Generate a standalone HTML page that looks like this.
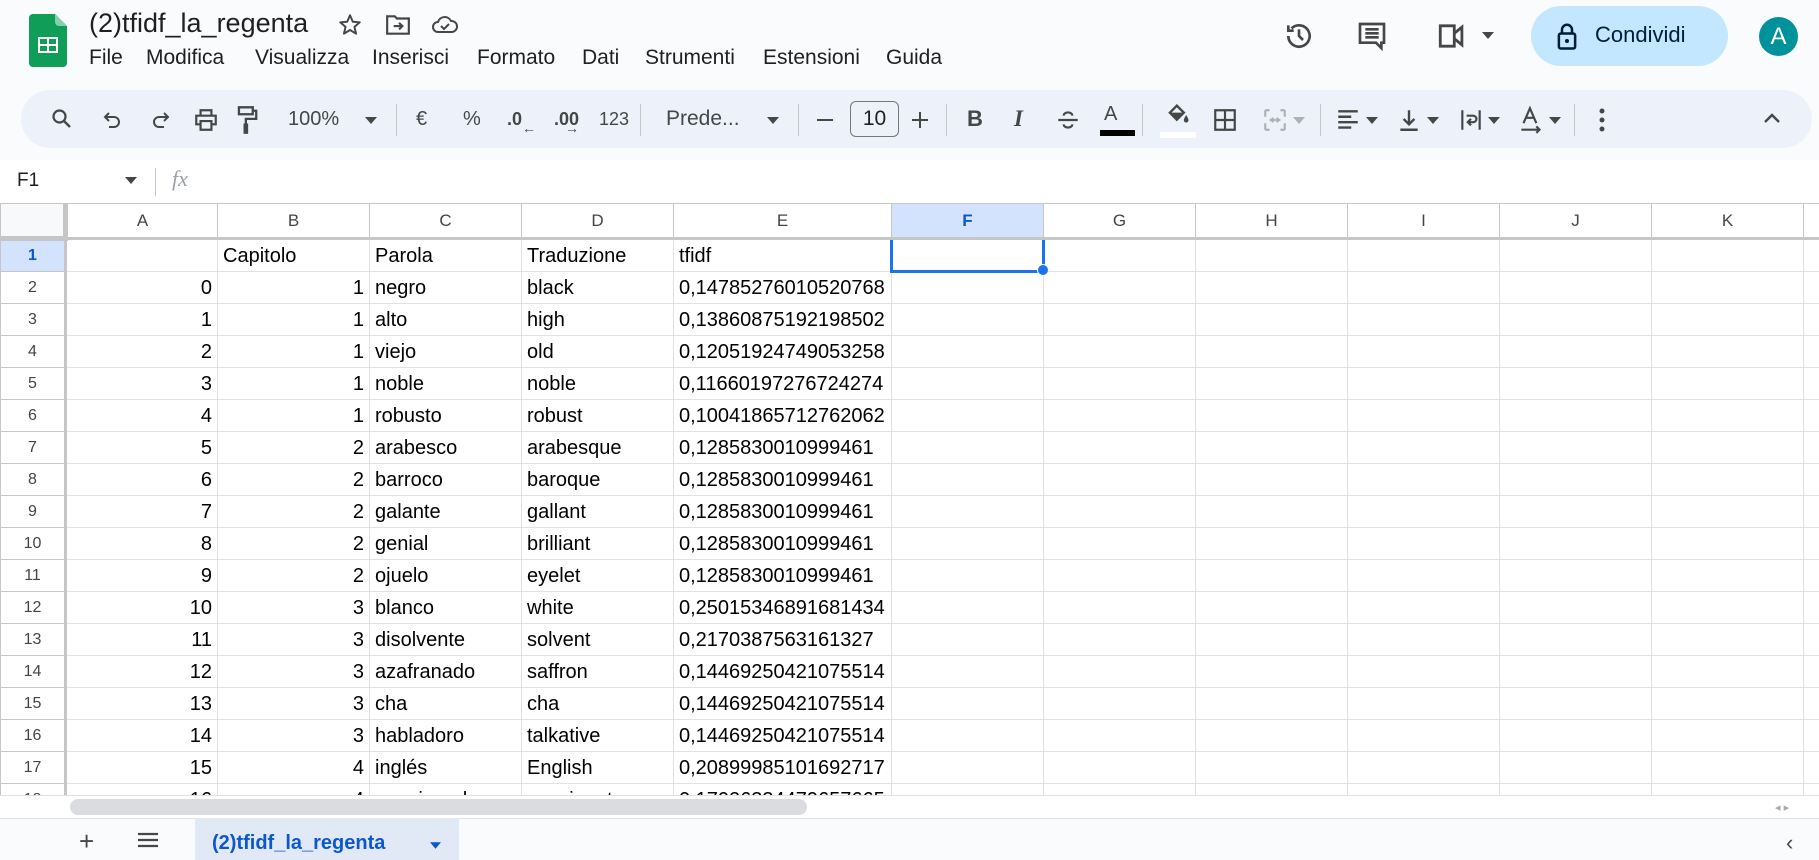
<!DOCTYPE html>
<html><head><meta charset="utf-8"><style>
*{box-sizing:border-box;margin:0;padding:0}
body{width:1819px;height:860px;overflow:hidden;background:#f9fbfd;font-family:"Liberation Sans",Arial,sans-serif;position:relative;color:#1f1f1f}
.a{position:absolute}
.menu span{position:absolute;top:46px;font-size:21px;color:#1f1f1f}
.tb{position:absolute;left:21px;top:90px;width:1791px;height:58px;background:#edf2fa;border-radius:29px}
.ti{position:absolute;top:17px;font-size:20px;color:#444746;line-height:24px}
.sep{position:absolute;top:14px;width:1px;height:32px;background:#c7c7c7}
svg{position:absolute}
.grid{position:absolute;left:0;top:203px;width:1819px;height:592px;overflow:hidden;background:#fff}
table{border-collapse:collapse;table-layout:fixed;font-size:20px;color:#000;width:1843px;min-width:1843px}
td{height:32px;border:1px solid #e1e1e1;padding:0 5px;white-space:nowrap;overflow:hidden;line-height:30px}
td.r{text-align:right}
td.h{background:#fff;color:#444;font-size:16px;text-align:center;border-color:#c4c7c5}
thead td{height:35px;background:#fff;color:#444;font-size:17px;text-align:center;border-color:#c4c7c5;border-bottom:3px solid #c4c7c5}
tbody td.h{border-right:3px solid #c4c7c5}
.sel{background:#d3e3fd!important;color:#0b57d0!important;font-weight:bold}
</style></head><body>
<svg style="left:29px;top:14px" width="38" height="53" viewBox="0 0 38 53"><path d="M4 0h22l12 12v37a4 4 0 0 1-4 4H4a4 4 0 0 1-4-4V4a4 4 0 0 1 4-4z" fill="#0f9d58"/><path d="M26 0v8a4 4 0 0 0 4 4h8z" fill="#87ceac"/><rect x="9" y="23" width="20" height="16" fill="#fff"/><rect x="11" y="25" width="7" height="5" fill="#0f9d58"/><rect x="20" y="25" width="7" height="5" fill="#0f9d58"/><rect x="11" y="32" width="7" height="5" fill="#0f9d58"/><rect x="20" y="32" width="7" height="5" fill="#0f9d58"/></svg>
<div class="a" style="left:89px;top:8px;font-size:27px;color:#1f1f1f">(2)tfidf_la_regenta</div>
<svg style="left:337px;top:12px" width="26" height="26" viewBox="0 0 24 24"><path d="M12 3l2.6 6 6.4.5-4.9 4.2 1.5 6.3L12 16.6 6.4 20l1.5-6.3L3 9.5 9.4 9z" fill="none" stroke="#444746" stroke-width="1.8" stroke-linejoin="round"/></svg>
<svg style="left:385px;top:13px" width="26" height="24" viewBox="0 0 24 22"><path d="M2 3h7l2 2h11v14H2z" fill="none" stroke="#444746" stroke-width="2"/><path d="M8 12h8M13 9l3 3-3 3" fill="none" stroke="#444746" stroke-width="2"/></svg>
<svg style="left:431px;top:12px" width="28" height="24" viewBox="0 0 28 22"><path d="M7 19a5 5 0 0 1 0-10 7 7 0 0 1 13-1 5.5 5.5 0 0 1 1 11z" fill="none" stroke="#444746" stroke-width="2"/><path d="M10 13l3 3 5-5" fill="none" stroke="#444746" stroke-width="2"/></svg>
<div class="menu"><span style="left:89px">File</span><span style="left:146px">Modifica</span><span style="left:255px">Visualizza</span><span style="left:372px">Inserisci</span><span style="left:477px">Formato</span><span style="left:582px">Dati</span><span style="left:645px">Strumenti</span><span style="left:763px">Estensioni</span><span style="left:886px">Guida</span></div>
<svg style="left:1283px;top:20px" width="32" height="32" viewBox="0 0 24 24"><path d="M4 12a8 8 0 1 0 2.4-5.7M4 4v4h4" fill="none" stroke="#444746" stroke-width="2"/><path d="M12 7v5l3 3" fill="none" stroke="#444746" stroke-width="2"/></svg>
<svg style="left:1356px;top:20px" width="32" height="32" viewBox="0 0 24 24"><path d="M3 3h18v14h-2v4l-4-4H3z" fill="none" stroke="#444746" stroke-width="2"/><path d="M7 7h10M7 10h10M7 13h10" stroke="#444746" stroke-width="2"/></svg>
<svg style="left:1436px;top:22px" width="34" height="28" viewBox="0 0 26 22"><path d="M3 3h11v16H3z" fill="none" stroke="#444746" stroke-width="2.2"/><path d="M14 9l6-5v14l-6-5" fill="none" stroke="#444746" stroke-width="2.2"/></svg>
<svg style="left:1482px;top:32px" width="12" height="8" viewBox="0 0 12 8"><path d="M0 0h12L6 7z" fill="#444746"/></svg>
<div class="a" style="left:1531px;top:6px;width:197px;height:60px;background:#c2e7ff;border-radius:30px"></div>
<svg style="left:1557px;top:22px" width="20" height="28" viewBox="0 0 16 22"><rect x="1.5" y="9" width="13" height="12" rx="1.5" fill="none" stroke="#001d35" stroke-width="2"/><path d="M4 9V6a4 4 0 0 1 8 0v3" fill="none" stroke="#001d35" stroke-width="2"/><circle cx="8" cy="15" r="1.6" fill="#001d35"/></svg>
<div class="a" style="left:1595px;top:22px;font-size:22px;color:#001d35">Condividi</div>
<div class="a" style="left:1759px;top:17px;width:39px;height:39px;border-radius:50%;background:#00929a;color:#fff;font-size:24px;text-align:center;line-height:39px">A</div>
<div class="tb">
<svg style="left:29px;top:17px" width="24" height="24" viewBox="0 0 24 24"><circle cx="9.5" cy="9.5" r="6" fill="none" stroke="#444746" stroke-width="2.2"/><path d="M14 14l6 6" stroke="#444746" stroke-width="2.4"/></svg>
<svg style="left:80px;top:18px" width="24" height="24" viewBox="0 0 24 24"><path d="M8 5L4 9l4 4M4 9h9a5 5 0 0 1 0 10H8" fill="none" stroke="#444746" stroke-width="2"/></svg>
<svg style="left:127px;top:18px" width="24" height="24" viewBox="0 0 24 24"><path d="M16 5l4 4-4 4M20 9h-9a5 5 0 0 0 0 10h5" fill="none" stroke="#444746" stroke-width="2"/></svg>
<svg style="left:172px;top:17px" width="26" height="26" viewBox="0 0 24 24"><path d="M7 8V3h10v5M7 16H3V8h18v8h-4M7 13h10v8H7z" fill="none" stroke="#444746" stroke-width="2"/></svg>
<svg style="left:215px;top:15px" width="22" height="30" viewBox="0 0 18 26"><path d="M2 2h12v6H2zM14 5h3v7H8v4" fill="none" stroke="#444746" stroke-width="2"/><rect x="6" y="16" width="4" height="9" fill="#444746"/></svg>
<div class="ti" style="left:267px">100%</div>
<svg style="left:344px;top:27px" width="12" height="7" viewBox="0 0 12 7"><path d="M0 0h12L6 7z" fill="#444746"/></svg>
<div class="sep" style="left:375px"></div>
<div class="ti" style="left:395px">€</div>
<div class="ti" style="left:442px">%</div>
<div class="ti" style="left:486px;font-weight:bold;font-size:18px">.0<span style="font-size:14px;position:relative;top:8px">←</span></div>
<div class="ti" style="left:533px;font-weight:bold;font-size:18px">.00<span style="font-size:14px;position:relative;top:8px;left:-14px">→</span></div>
<div class="ti" style="left:578px;font-size:18px">123</div>
<div class="sep" style="left:619px"></div>
<div class="ti" style="left:645px;font-size:21px">Prede...</div>
<svg style="left:746px;top:27px" width="12" height="7" viewBox="0 0 12 7"><path d="M0 0h12L6 7z" fill="#444746"/></svg>
<div class="sep" style="left:777px"></div>
<div class="a" style="left:796px;top:29px;width:16px;height:2px;background:#444746"></div>
<div class="a" style="left:829px;top:11px;width:49px;height:36px;border:1.5px solid #747775;border-radius:6px;font-size:21px;text-align:center;line-height:33px;color:#1f1f1f">10</div>
<div class="a" style="left:891px;top:29px;width:16px;height:2px;background:#444746"></div>
<div class="a" style="left:898px;top:22px;width:2px;height:16px;background:#444746"></div>
<div class="sep" style="left:925px"></div>
<div class="ti" style="left:946px;font-weight:bold;font-size:22px;color:#444746">B</div>
<div class="ti" style="left:993px;font-style:italic;font-size:23px;font-family:'Liberation Serif',serif;font-weight:bold">I</div>
<svg style="left:1034px;top:17px" width="26" height="26" viewBox="0 0 24 24"><path d="M3 12h18M8 8a4 3 0 0 1 8 0M8 16a4 3 0 0 0 8 0" fill="none" stroke="#444746" stroke-width="2"/></svg>
<div class="ti" style="left:1083px;top:12px;font-size:20px">A</div>
<div class="a" style="left:1079px;top:40px;width:35px;height:6px;background:#000"></div>
<div class="sep" style="left:1121px"></div>
<svg style="left:1143px;top:12px" width="28" height="26" viewBox="0 0 24 22"><path d="M5 9l6-6 6 6-6 6z" fill="none" stroke="#444746" stroke-width="2"/><path d="M19 11c1.5 2.5 2 3.5 2 4.5a2 2 0 0 1-4 0c0-1 .5-2 2-4.5z" fill="#444746"/><path d="M5 9h12l-6 6z" fill="#444746"/></svg>
<div class="a" style="left:1139px;top:42px;width:36px;height:6px;background:#fff"></div>
<svg style="left:1191px;top:17px" width="26" height="26" viewBox="0 0 24 24"><path d="M3 3h18v18H3zM12 3v18M3 12h18" fill="none" stroke="#444746" stroke-width="2"/></svg>
<svg style="left:1241px;top:17px" width="26" height="26" viewBox="0 0 24 24"><path d="M3 3h4M3 21h4M17 3h4M17 21h4M3 3v6M3 15v6M21 3v6M21 15v6M7 12h4M13 12h4M9 10l2 2-2 2M15 10l-2 2 2 2" fill="none" stroke="#aeb1b3" stroke-width="2"/></svg>
<svg style="left:1272px;top:27px" width="12" height="7" viewBox="0 0 12 7"><path d="M0 0h12L6 7z" fill="#aeb1b3"/></svg>
<div class="sep" style="left:1299px"></div>
<svg style="left:1314px;top:17px" width="26" height="26" viewBox="0 0 24 24"><path d="M3 4h18M3 9h12M3 14h18M3 19h12" stroke="#444746" stroke-width="2.2"/></svg>
<svg style="left:1345px;top:27px" width="12" height="7" viewBox="0 0 12 7"><path d="M0 0h12L6 7z" fill="#444746"/></svg>
<svg style="left:1375px;top:17px" width="26" height="26" viewBox="0 0 24 24"><path d="M12 3v13M7 11l5 5 5-5M4 21h16" fill="none" stroke="#444746" stroke-width="2.2"/></svg>
<svg style="left:1406px;top:27px" width="12" height="7" viewBox="0 0 12 7"><path d="M0 0h12L6 7z" fill="#444746"/></svg>
<svg style="left:1437px;top:17px" width="26" height="26" viewBox="0 0 24 24"><path d="M4 3v18M20 3v18M8 8h6a3 3 0 0 1 0 6h-4M12 11l-3 3 3 3" fill="none" stroke="#444746" stroke-width="2"/></svg>
<svg style="left:1467px;top:27px" width="12" height="7" viewBox="0 0 12 7"><path d="M0 0h12L6 7z" fill="#444746"/></svg>
<svg style="left:1497px;top:15px" width="26" height="30" viewBox="0 0 24 28"><path d="M5 17L11 3l6 14M7 12h8M3 23h17M17 20l3 3-3 3" fill="none" stroke="#444746" stroke-width="2"/></svg>
<svg style="left:1528px;top:27px" width="12" height="7" viewBox="0 0 12 7"><path d="M0 0h12L6 7z" fill="#444746"/></svg>
<div class="sep" style="left:1553px"></div>
<svg style="left:1577px;top:17px" width="8" height="26" viewBox="0 0 8 26"><circle cx="4" cy="4" r="2.5" fill="#444746"/><circle cx="4" cy="13" r="2.5" fill="#444746"/><circle cx="4" cy="22" r="2.5" fill="#444746"/></svg>
<svg style="left:1742px;top:22px" width="18" height="12" viewBox="0 0 18 12"><path d="M2 10l7-7 7 7" fill="none" stroke="#444746" stroke-width="2.4"/></svg>
</div>
<div class="a" style="left:0;top:160px;width:1819px;height:43px;background:#fff"></div>
<div class="a" style="left:17px;top:170px;font-size:19px;color:#1f1f1f">F1</div>
<svg style="left:125px;top:177px" width="12" height="7" viewBox="0 0 12 7"><path d="M0 0h12L6 7z" fill="#444746"/></svg>
<div class="a" style="left:155px;top:168px;width:1px;height:28px;background:#c7c7c7"></div>
<div class="a" style="left:172px;top:166px;font-size:22px;color:#9aa0a6;font-style:italic;font-family:'Liberation Serif',serif">fx</div>
<div class="grid">
<table>
<colgroup><col style="width:65px"><col style="width:152px"><col style="width:152px"><col style="width:152px"><col style="width:152px"><col style="width:218px"><col style="width:152px"><col style="width:152px"><col style="width:152px"><col style="width:152px"><col style="width:152px"><col style="width:152px"><col style="width:40px"></colgroup>
<thead><tr><td style="background:#f8f9fa;border-right:5px solid #c4c7c5;border-bottom:5px solid #c4c7c5"></td><td>A</td><td>B</td><td>C</td><td>D</td><td>E</td><td class="sel">F</td><td>G</td><td>H</td><td>I</td><td>J</td><td>K</td><td></td></tr></thead>
<tbody>
<tr><td class="h sel">1</td><td></td><td>Capitolo</td><td>Parola</td><td>Traduzione</td><td>tfidf</td><td style="border:3px solid #1a73e8"></td><td></td><td></td><td></td><td></td><td></td><td></td></tr>
<tr><td class="h">2</td><td class="r">0</td><td class="r">1</td><td>negro</td><td>black</td><td>0,14785276010520768</td><td></td><td></td><td></td><td></td><td></td><td></td><td></td></tr>
<tr><td class="h">3</td><td class="r">1</td><td class="r">1</td><td>alto</td><td>high</td><td>0,13860875192198502</td><td></td><td></td><td></td><td></td><td></td><td></td><td></td></tr>
<tr><td class="h">4</td><td class="r">2</td><td class="r">1</td><td>viejo</td><td>old</td><td>0,12051924749053258</td><td></td><td></td><td></td><td></td><td></td><td></td><td></td></tr>
<tr><td class="h">5</td><td class="r">3</td><td class="r">1</td><td>noble</td><td>noble</td><td>0,11660197276724274</td><td></td><td></td><td></td><td></td><td></td><td></td><td></td></tr>
<tr><td class="h">6</td><td class="r">4</td><td class="r">1</td><td>robusto</td><td>robust</td><td>0,10041865712762062</td><td></td><td></td><td></td><td></td><td></td><td></td><td></td></tr>
<tr><td class="h">7</td><td class="r">5</td><td class="r">2</td><td>arabesco</td><td>arabesque</td><td>0,1285830010999461</td><td></td><td></td><td></td><td></td><td></td><td></td><td></td></tr>
<tr><td class="h">8</td><td class="r">6</td><td class="r">2</td><td>barroco</td><td>baroque</td><td>0,1285830010999461</td><td></td><td></td><td></td><td></td><td></td><td></td><td></td></tr>
<tr><td class="h">9</td><td class="r">7</td><td class="r">2</td><td>galante</td><td>gallant</td><td>0,1285830010999461</td><td></td><td></td><td></td><td></td><td></td><td></td><td></td></tr>
<tr><td class="h">10</td><td class="r">8</td><td class="r">2</td><td>genial</td><td>brilliant</td><td>0,1285830010999461</td><td></td><td></td><td></td><td></td><td></td><td></td><td></td></tr>
<tr><td class="h">11</td><td class="r">9</td><td class="r">2</td><td>ojuelo</td><td>eyelet</td><td>0,1285830010999461</td><td></td><td></td><td></td><td></td><td></td><td></td><td></td></tr>
<tr><td class="h">12</td><td class="r">10</td><td class="r">3</td><td>blanco</td><td>white</td><td>0,25015346891681434</td><td></td><td></td><td></td><td></td><td></td><td></td><td></td></tr>
<tr><td class="h">13</td><td class="r">11</td><td class="r">3</td><td>disolvente</td><td>solvent</td><td>0,2170387563161327</td><td></td><td></td><td></td><td></td><td></td><td></td><td></td></tr>
<tr><td class="h">14</td><td class="r">12</td><td class="r">3</td><td>azafranado</td><td>saffron</td><td>0,14469250421075514</td><td></td><td></td><td></td><td></td><td></td><td></td><td></td></tr>
<tr><td class="h">15</td><td class="r">13</td><td class="r">3</td><td>cha</td><td>cha</td><td>0,14469250421075514</td><td></td><td></td><td></td><td></td><td></td><td></td><td></td></tr>
<tr><td class="h">16</td><td class="r">14</td><td class="r">3</td><td>habladoro</td><td>talkative</td><td>0,14469250421075514</td><td></td><td></td><td></td><td></td><td></td><td></td><td></td></tr>
<tr><td class="h">17</td><td class="r">15</td><td class="r">4</td><td>inglés</td><td>English</td><td>0,20899985101692717</td><td></td><td></td><td></td><td></td><td></td><td></td><td></td></tr>
<tr><td class="h">18</td><td class="r">16</td><td class="r">4</td><td>apasionado</td><td>passionate</td><td>0,17026334479657665</td><td></td><td></td><td></td><td></td><td></td><td></td><td></td></tr>
</tbody></table>
<div class="a" style="left:1037px;top:61px;width:12px;height:12px;border-radius:50%;background:#1a73e8;border:1px solid #fff"></div>
</div>
<div class="a" style="left:0;top:795px;width:1819px;height:23px;background:#fff;border-top:1px solid #e1e1e1"></div>
<div class="a" style="left:70px;top:799px;width:737px;height:16px;border-radius:8px;background:#dadce0"></div>
<div class="a" style="left:1775px;top:801px;font-size:11px;color:#aaa">◂ ▸</div>
<div class="a" style="left:0;top:818px;width:1819px;height:42px;background:#f9fbfd;border-top:1px solid #e1e1e1"></div>
<div class="a" style="left:79px;top:826px;font-size:26px;color:#444746">+</div>
<svg style="left:137px;top:832px" width="22" height="16" viewBox="0 0 22 16"><path d="M1 2h20M1 8h20M1 14h20" stroke="#444746" stroke-width="2.2"/></svg>
<div class="a" style="left:195px;top:818px;width:264px;height:42px;background:#e1e9f7"></div>
<div class="a" style="left:212px;top:832px;font-size:20px;color:#0b57d0;font-weight:bold">(2)tfidf_la_regenta</div>
<svg style="left:430px;top:842px" width="11" height="7" viewBox="0 0 12 7"><path d="M0 0h12L6 7z" fill="#0b57d0"/></svg>
<div class="a" style="left:1786px;top:830px;font-size:22px;color:#444746">‹</div>
</body></html>
